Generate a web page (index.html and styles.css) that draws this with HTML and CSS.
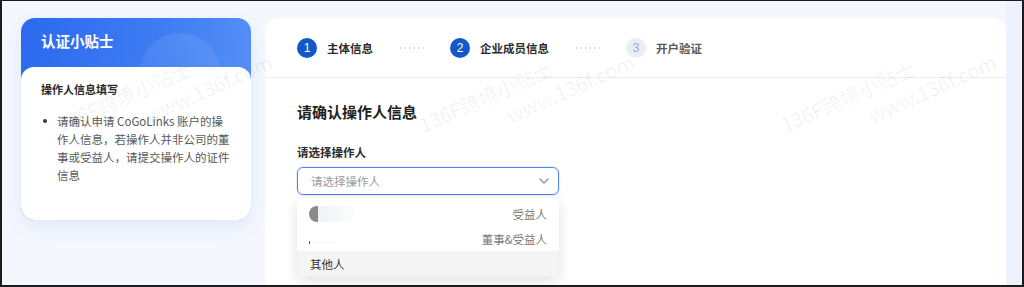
FILE: index.html
```html
<!DOCTYPE html>
<html lang="zh-CN">
<head>
<meta charset="utf-8">
<title>认证</title>
<link rel="stylesheet" href="styles.css">
</head>
<body>
<div class="frame">
  <aside class="tips">
    <div class="tips-head">
      <span class="tips-deco"></span>
      <h2>认证小贴士</h2>
    </div>
    <div class="tips-body">
      <h3>操作人信息填写</h3>
      <ul>
        <li>请确认申请 CoGoLinks 账户的操作人信息，若操作人并非公司的董事或受益人，请提交操作人的证件信息</li>
      </ul>
    </div>
  </aside>

  <main class="panel">
    <div class="steps">
      <div class="step">
        <span class="step-num">1</span>
        <span class="step-label">主体信息</span>
      </div>
      <span class="step-dots"></span>
      <div class="step">
        <span class="step-num">2</span>
        <span class="step-label">企业成员信息</span>
      </div>
      <span class="step-dots"></span>
      <div class="step step-todo">
        <span class="step-num">3</span>
        <span class="step-label">开户验证</span>
      </div>
    </div>

    <section class="form">
      <h1>请确认操作人信息</h1>
      <div class="field-label">请选择操作人</div>
      <div class="select-wrap">
        <div class="select">
          <span class="placeholder">请选择操作人</span>
          <svg class="chevron" width="10" height="6" viewBox="0 0 10 6"><polyline points="1,1 5,5 9,1" fill="none" stroke="#8a8f99" stroke-width="1.2" stroke-linecap="round" stroke-linejoin="round"/></svg>
        </div>
        <div class="dropdown">
          <div class="opt"><span class="redact redact-a"></span><span>受益人</span></div>
          <div class="opt"><span class="redact redact-b"></span><span>董事&amp;受益人</span></div>
          <div class="opt opt-hover"><span class="opt-name">其他人</span></div>
        </div>
      </div>
    </section>
  </main>

  <div class="gutter"></div>

  <div class="wm wm-c"><div>136F跨境小贴士</div><div class="wm-l2">www.136f.com</div></div>
  <div class="wm wm-a"><div>136F跨境小贴士</div><div class="wm-l2">www.136f.com</div></div>
  <div class="wm wm-b"><div>136F跨境小贴士</div><div class="wm-l2">www.136f.com</div></div>
</div>
</body>
</html>
```

FILE: styles.css
```css
* { box-sizing: border-box; }

html, body {
  margin: 0;
  padding: 0;
  background: #ffffff;
}

body {
  font-family: "Noto Sans CJK SC", "Noto Sans", sans-serif;
}

.frame {
  position: relative;
  width: 1024px;
  height: 287px;
  overflow: hidden;
  border: 2px solid #1c1c1e;
  border-top-width: 1px;
  background: #f4f7fe;
  display: flex;
  align-items: flex-start;
  padding: 17px 0 0 19px;
}

/* ---------- left tips card ---------- */
.tips {
  position: relative;
  flex: 0 0 230px;
  width: 230px;
  border-radius: 14px;
  overflow: hidden;
  background: linear-gradient(100deg, #2b69ef 0%, #3f7df3 55%, #5b95f7 100%);
  box-shadow: 0 6px 18px rgba(60, 100, 180, 0.10);
}

.tips-head {
  position: relative;
  height: 49px;
  padding: 13px 20px 0;
}

.tips-head h2 {
  position: relative;
  margin: 0;
  font-size: 14.5px;
  line-height: 20px;
  font-weight: 700;
  color: #ffffff;
}

.tips-deco {
  position: absolute;
  left: 119px;
  top: 15px;
  width: 80px;
  height: 80px;
  border-radius: 50%;
  background: linear-gradient(180deg, rgba(255,255,255,0.09), rgba(255,255,255,0.02));
}

.tips-body {
  position: relative;
  background: #ffffff;
  border-radius: 13px 13px 0 0;
  padding: 14px 20px 36px;
}

.tips-body h3 {
  margin: 0;
  font-size: 11px;
  line-height: 16px;
  font-weight: 700;
  color: #2a2a2a;
}

.tips-body ul {
  margin: 14.5px 0 0;
  padding: 0;
  list-style: none;
}

.tips-body li {
  position: relative;
  padding-left: 16px;
  font-size: 11.5px;
  line-height: 18.2px;
  color: #595959;
}

.tips-body li::before {
  content: "";
  position: absolute;
  left: 2px;
  top: 7.5px;
  width: 4px;
  height: 4px;
  border-radius: 50%;
  background: #3a3a3a;
}

/* ---------- main panel ---------- */
.panel {
  flex: 1 1 auto;
  align-self: stretch;
  margin-left: 14px;
  background: #ffffff;
  border-radius: 14px 14px 0 0;
}

.gutter {
  flex: 0 0 16px;
  align-self: stretch;
  margin-top: -17px;
  background: #eef2fd;
}

.steps {
  height: 60px;
  display: flex;
  align-items: center;
  padding-left: 32px;
  border-bottom: 1px solid #eceef3;
}

.step {
  display: flex;
  align-items: center;
  gap: 10px;
}

.step-num {
  width: 20px;
  height: 20px;
  border-radius: 50%;
  background: #1457c8;
  color: #ffffff;
  font-size: 12px;
  line-height: 20px;
  text-align: center;
  font-family: "Liberation Sans", "Noto Sans", sans-serif;
}

.step-label {
  font-size: 11.5px;
  line-height: 16px;
  font-weight: 700;
  color: #2e2e2e;
}

.step-todo .step-num {
  background: #e9eef6;
  color: #a3abb8;
}

.step-todo .step-label {
  color: #555a61;
}

.step-dots {
  width: 27px;
  height: 2px;
  margin: 0 25px;
  background-image: radial-gradient(circle, #c4c8cf 0.7px, transparent 1px);
  background-size: 4.6px 2px;
  background-repeat: repeat-x;
}

/* ---------- form ---------- */
.form {
  padding: 24px 32px 0;
}

.form h1 {
  margin: 0;
  font-size: 15px;
  line-height: 20px;
  font-weight: 700;
  color: #222222;
}

.field-label {
  margin-top: 22px;
  font-size: 11.5px;
  line-height: 16px;
  font-weight: 700;
  color: #2b2b2b;
}

.select-wrap {
  position: relative;
  width: 262px;
  margin-top: 7px;
}

.select {
  height: 28px;
  border: 1px solid #4d86f1;
  border-radius: 6px;
  padding: 0 9px 0 13px;
  display: flex;
  align-items: center;
  justify-content: space-between;
  box-shadow: 0 0 0 1px rgba(77, 134, 241, 0.12);
}

.placeholder {
  font-size: 11.5px;
  line-height: 16px;
  color: #9b9b9b;
}

.dropdown {
  position: absolute;
  left: 0;
  right: 0;
  top: calc(100% + 3px);
  background: #ffffff;
  border-radius: 4px;
  padding-top: 3px;
  box-shadow: 0 4px 14px rgba(0, 0, 0, 0.12);
  overflow: hidden;
}

.opt {
  height: 25px;
  padding: 0 12px 0 12px;
  display: flex;
  align-items: center;
  justify-content: space-between;
  font-size: 11.5px;
  color: #7a7a7a;
}

.opt-hover {
  height: 26px;
  background: #f4f4f5;
  padding-left: 13px;
}

.opt-name {
  color: #333333;
}

.redact {
  display: block;
  border-radius: 8px;
}

.redact-a {
  width: 48px;
  height: 16px;
  background: linear-gradient(90deg, #8a8a8a 0, #8a8a8a 9px, #f1f2f6 9px, #f6f7fa 60%, rgba(255,255,255,0) 100%);
}

.redact-b {
  width: 32px;
  height: 18px;
  border-radius: 0;
  background: linear-gradient(90deg, #555 0, #555 1px, #fafbfc 1px, #f8f9fb 70%, rgba(255,255,255,0) 100%);
  background-size: 100% 3px;
  background-repeat: no-repeat;
  background-position: 0 11px;
}

/* ---------- watermarks ---------- */
.wm {
  position: absolute;
  pointer-events: none;
  transform: rotate(-24deg);
  transform-origin: 0 0;
  font-size: 20px;
  line-height: 23px;
  color: rgba(0, 0, 0, 0.06);
  white-space: nowrap;
}

.wm-l2 {
  margin-left: 84px;
  margin-top: 4px;
}

.wm-a { left: 413px; top: 114px; }
.wm-b { left: 775px; top: 114px; }
.wm-c { left: 51px;  top: 114px; }
```
